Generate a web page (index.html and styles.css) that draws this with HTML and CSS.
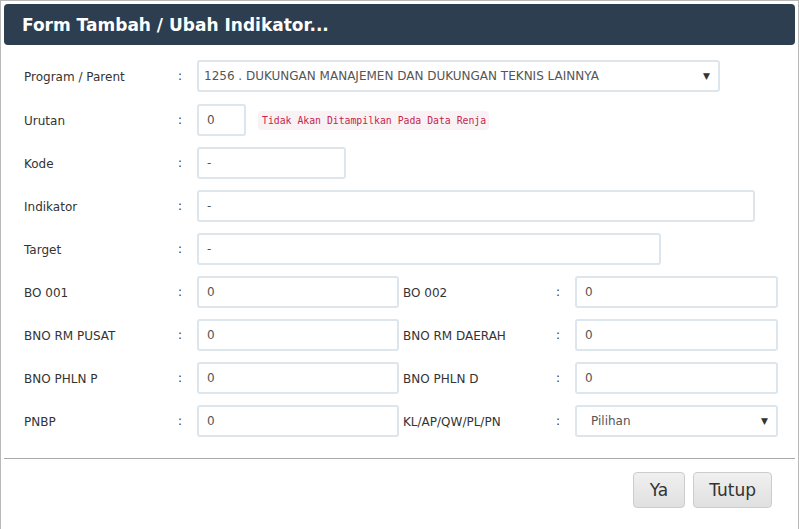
FILE: index.html
```html
<!DOCTYPE html>
<html>
<head>
<meta charset="utf-8">
<link rel="stylesheet" href="styles.css">
</head>
<body>
<div class="dialog">
  <div class="title">Form Tambah / Ubah Indikator...</div>
  <div class="form">
    <div class="row">
      <div class="label">Program / Parent</div><div class="colon">:</div>
      <div class="field select w-prog"><span>1256 . DUKUNGAN MANAJEMEN DAN DUKUNGAN TEKNIS LAINNYA</span><span class="caret">▼</span></div>
    </div>
    <div class="row">
      <div class="label">Urutan</div><div class="colon">:</div>
      <div class="field w-urut">0</div>
      <code class="note">Tidak Akan Ditampilkan Pada Data Renja</code>
    </div>
    <div class="row">
      <div class="label">Kode</div><div class="colon">:</div>
      <div class="field w-kode">-</div>
    </div>
    <div class="row">
      <div class="label">Indikator</div><div class="colon">:</div>
      <div class="field w-ind">-</div>
    </div>
    <div class="row">
      <div class="label">Target</div><div class="colon">:</div>
      <div class="field w-tgt">-</div>
    </div>
    <div class="row">
      <div class="label">BO 001</div><div class="colon">:</div>
      <div class="field w-half">0</div>
      <div class="label2">BO 002</div><div class="colon">:</div>
      <div class="field w-half2">0</div>
    </div>
    <div class="row">
      <div class="label">BNO RM PUSAT</div><div class="colon">:</div>
      <div class="field w-half">0</div>
      <div class="label2">BNO RM DAERAH</div><div class="colon">:</div>
      <div class="field w-half2">0</div>
    </div>
    <div class="row">
      <div class="label">BNO PHLN P</div><div class="colon">:</div>
      <div class="field w-half">0</div>
      <div class="label2">BNO PHLN D</div><div class="colon">:</div>
      <div class="field w-half2">0</div>
    </div>
    <div class="row">
      <div class="label">PNBP</div><div class="colon">:</div>
      <div class="field w-half">0</div>
      <div class="label2">KL/AP/QW/PL/PN</div><div class="colon">:</div>
      <div class="field select w-half2"><span>Pilihan</span><span class="caret">▼</span></div>
    </div>
  </div>
  <div class="divider"></div>
  <div class="actions">
    <button class="btn btn-ya">Ya</button>
    <button class="btn">Tutup</button>
  </div>
</div>
</body>
</html>
```
FILE: styles.css
```css
html, body {
  margin: 0;
  padding: 0;
  background: #fff;
}
body {
  font-family: "DejaVu Sans", Verdana, sans-serif;
  font-size: 12px;
  color: #333;
}
.dialog {
  box-sizing: border-box;
  height: 529px;
  border: 1px solid #b9b9b9;
  border-bottom: none;
  padding: 3px 3px 0 3px;
}
.title {
  background: #2c3e50;
  border-radius: 4px;
  height: 41px;
  line-height: 42px;
  padding-left: 18px;
  color: #fff;
  font-weight: bold;
  font-size: 17px;
}
.form {
  padding: 15px 0 0 20px;
}
.row {
  display: flex;
  align-items: center;
  height: 32px;
  margin-bottom: 11px;
}
.row:first-child {
  margin-bottom: 12px;
}
.label {
  width: 154px;
  padding-top: 1px;
}
.label2 {
  width: 153px;
  padding-left: 4px;
  padding-top: 1px;
}
.colon {
  width: 19px;
}
.field {
  box-sizing: border-box;
  height: 32px;
  border: 2px solid #dde5ed;
  border-radius: 3px;
  padding: 0 8px;
  color: #555;
  display: flex;
  align-items: center;
  background: #fff;
}
.select {
  justify-content: space-between;
  padding: 0 8px 0 5px;
}
.select .caret {
  font-size: 9px;
  color: #333;
}
.w-prog { width: 523px; }
.w-urut { width: 49px; }
.w-kode { width: 149px; }
.w-ind { width: 558px; }
.w-tgt { width: 464px; }
.w-half { width: 202px; }
.w-half2 { width: 203px; }
.w-half2.select { padding-left: 14px; }
.note {
  margin-left: 12px;
  font-family: "DejaVu Sans Mono", monospace;
  font-size: 9.8px;
  color: #c7254e;
  background: #f9f2f4;
  border-radius: 4px;
  padding: 4px 3px 4px 4px;
}
.divider {
  margin-top: 21px;
  height: 1px;
  background: #a9a9a9;
}
.actions {
  display: flex;
  justify-content: flex-end;
  gap: 8px;
  padding: 13px 23px 0 0;
}
.btn {
  font-family: "DejaVu Sans", Verdana, sans-serif;
  font-size: 17px;
  color: #333;
  height: 36px;
  padding: 0 15px;
  border: 1px solid #ccc;
  border-radius: 4px;
  background: linear-gradient(#f0f0f0, #e0e0e0);
}
.btn-ya {
  padding: 0 16px;
}
```
